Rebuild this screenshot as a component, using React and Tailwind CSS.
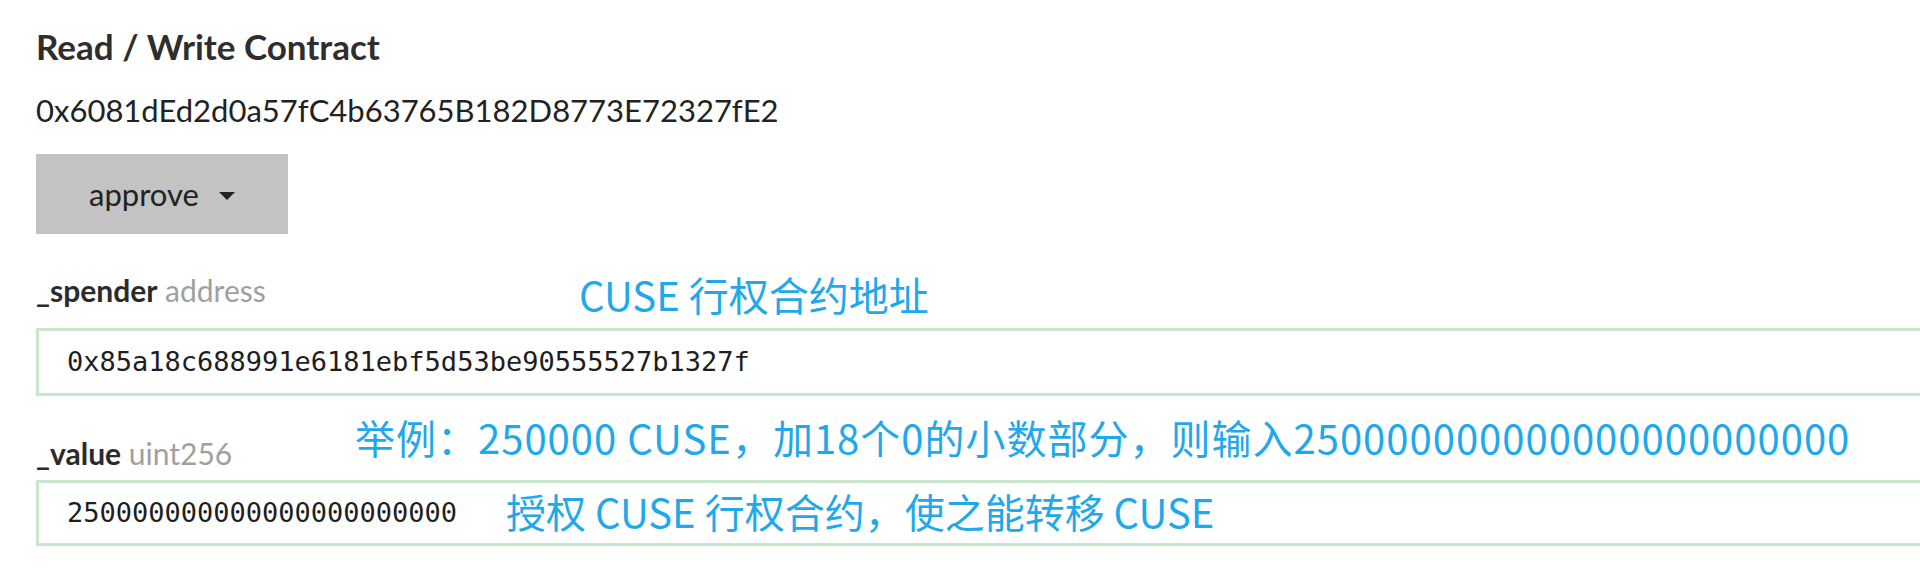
import React from 'react';

const Annotation = ({ className, children }) => (
  <span
    className={`absolute whitespace-nowrap text-[40px] leading-[48px] text-[#1fa8ea] font-['Noto_Sans_CJK_SC',sans-serif] ${className}`}
  >
    {children}
  </span>
);

const Field = ({ name, type }) => (
  <span className="text-[30px] leading-[36px]">
    <span className="font-bold text-[#2b2b2b]">{name}</span>{' '}
    <span className="text-[#a0a0a0]">{type}</span>
  </span>
);

const App = () => {
  return (
    <div className="w-screen h-[576px] overflow-hidden bg-white font-['Lato','Noto_Sans',sans-serif]">
      <div className="pl-[36px] pt-[26px]">
        <h1 className="text-[35px] leading-[40px] font-bold text-[#2e2e2e]">Read / Write Contract</h1>

        <p className="mt-[26px] text-[31px] leading-[36px] text-[#222]">0x6081dEd2d0a57fC4b63765B182D8773E72327fE2</p>

        <div className="mt-[26px] w-[252px] h-[80px] bg-[#c3c3c3] flex items-center justify-center gap-[20px]">
          <span className="text-[31px] leading-[36px] text-[#222]">approve</span>
          <span className="w-0 h-0 border-l-[8px] border-r-[8px] border-t-[8px] border-l-transparent border-r-transparent border-t-[#222] mt-[3px]" />
        </div>

        <div className="relative mt-[32px] h-[48px] flex items-center">
          <Field name="_spender" type="address" />
          <Annotation className="left-[543px] top-[4px]">CUSE 行权合约地址</Annotation>
        </div>

        <div className="mt-[14px] w-[1900px] h-[68px] border-[3px] border-[#c8e6c9] flex items-center pl-[28px]">
          <span className="text-[27px] leading-[36px] text-[#1e1e1e] font-['DejaVu_Sans_Mono',monospace]">
            0x85a18c688991e6181ebf5d53be90555527b1327f
          </span>
        </div>

        <div className="relative mt-[33px] h-[48px] flex items-center">
          <Field name="_value" type="uint256" />
          <Annotation className="left-[319px] -top-[16px] tracking-[1px]">
            举例：250000 CUSE，加18个0的小数部分，则输入250000000000000000000000
          </Annotation>
        </div>

        <div className="relative mt-[3px] w-[1900px] h-[66px] border-[3px] border-[#c8e6c9] flex items-center pl-[28px]">
          <span className="text-[27px] leading-[36px] text-[#1e1e1e] font-['DejaVu_Sans_Mono',monospace]">
            250000000000000000000000
          </span>
          <Annotation className="left-[467px] top-[4px]">授权 CUSE 行权合约，使之能转移 CUSE</Annotation>
        </div>
      </div>
    </div>
  );
};

export default App;
